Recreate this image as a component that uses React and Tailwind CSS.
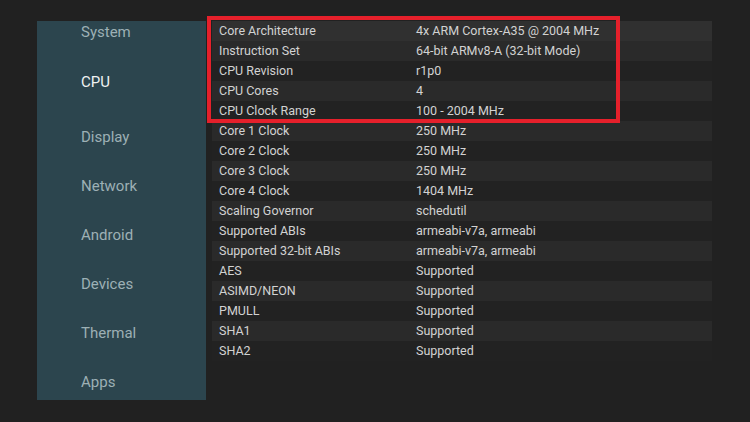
const menu = ["System", "CPU", "Display", "Network", "Android", "Devices", "Thermal", "Apps"];

const rows = [
  ["Core Architecture", "4x ARM Cortex-A35 @ 2004 MHz"],
  ["Instruction Set", "64-bit ARMv8-A (32-bit Mode)"],
  ["CPU Revision", "r1p0"],
  ["CPU Cores", "4"],
  ["CPU Clock Range", "100 - 2004 MHz"],
  ["Core 1 Clock", "250 MHz"],
  ["Core 2 Clock", "250 MHz"],
  ["Core 3 Clock", "250 MHz"],
  ["Core 4 Clock", "1404 MHz"],
  ["Scaling Governor", "schedutil"],
  ["Supported ABIs", "armeabi-v7a, armeabi"],
  ["Supported 32-bit ABIs", "armeabi-v7a, armeabi"],
  ["AES", "Supported"],
  ["ASIMD/NEON", "Supported"],
  ["PMULL", "Supported"],
  ["SHA1", "Supported"],
  ["SHA2", "Supported"],
];

export default function App() {
  return (
    <div className="h-[422px] w-[750px] overflow-hidden bg-[#212121] font-['Roboto',sans-serif]">
      <div className="flex pt-[21px] pl-[37px]">
        <aside className="h-[379px] w-[169px] overflow-hidden bg-[#2c454e]">
          <div className="-mt-[13px]">
            {menu.map((m) => (
              <div
                key={m}
                className={
                  m === "CPU"
                    ? "flex h-[56px] items-center pb-[6px] pl-[44px] text-[15px] text-[#f0f2f2]"
                    : "flex h-[49px] items-center pl-[44px] text-[15px] text-[#9db0b5]"
                }
              >
                {m}
              </div>
            ))}
          </div>
        </aside>

        <main className="relative ml-[6px] w-[500px]">
          {rows.map(([k, v], i) => (
            <div
              key={k}
              className={
                "flex h-[20px] items-center pt-[1px] text-[12.5px] text-[#d2d2d2] " +
                (i === 0 ? "bg-[#303030]" : i % 2 === 1 ? "bg-[#2a2a2a]" : "bg-[#222222]")
              }
            >
              <span className="w-[204px] pl-[7px]">{k}</span>
              <span>{v}</span>
            </div>
          ))}
          <div className="pointer-events-none absolute left-[-5px] top-[-5px] h-[107px] w-[413px] border-[4px] border-[#e5202b]" />
        </main>
      </div>
    </div>
  );
}
